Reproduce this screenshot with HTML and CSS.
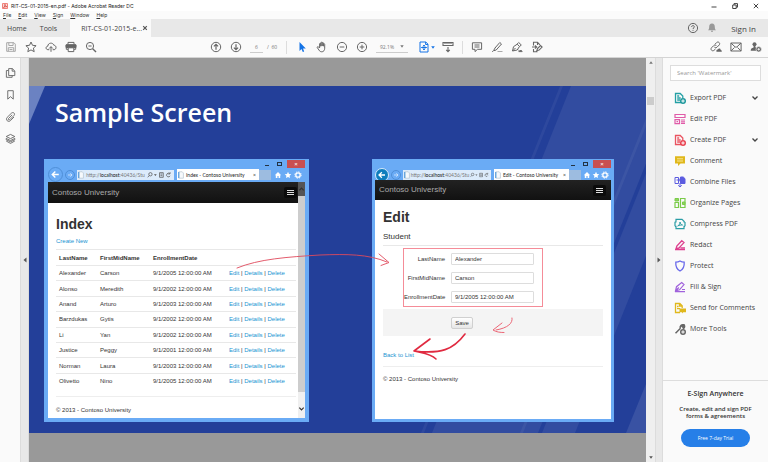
FILE: index.html
```
<!DOCTYPE html>
<html lang="en">
<head>
<meta charset="utf-8">
<title>RIT-CS-01-2015-en.pdf - Adobe Acrobat Reader DC</title>
<link rel="stylesheet" href="styles.css">
</head>
<body>
<svg class="defs" aria-hidden="true">
  <symbol id="plus-badge" viewBox="0 0 6 6"><circle cx="3" cy="3" r="3" fill="currentColor"/><path d="M3 1.3v3.4M1.3 3h3.4" stroke="#fff" stroke-width="1"/></symbol>
  <symbol id="house" viewBox="0 0 8 8"><path d="M4 1 .8 4.2h1V7h1.6V5h1.2v2h1.6V4.2h1z" fill="#fff"/></symbol>
  <symbol id="star" viewBox="0 0 8 8"><path d="m4 .8 1 2.1 2.3.3-1.7 1.6.4 2.3L4 6 2 7.1l.4-2.3L.7 3.2 3 2.9z" fill="#fff"/></symbol>
  <symbol id="gear" viewBox="0 0 8 8"><circle cx="4" cy="4" r="2.2" fill="none" stroke="#fff" stroke-width="1.3"/><circle cx="4" cy="4" r="3.2" fill="none" stroke="#fff" stroke-width=".9" stroke-dasharray="1.4 1.1"/></symbol>
  <symbol id="addr-tools" viewBox="0 0 28 8"><circle cx="3.7" cy="3.2" r="1.8"/><path d="M2.4 4.6.8 6.5M13.5 1.5h4v5h-4zM14.5 3h2M14.5 4.7h2M24.5 2.6a2 2 0 1 0 .4 2.3M24.8.9v2h-2"/><path d="M7.5 3.2h3L9 5z" fill="#555" stroke="none"/></symbol>
  <symbol id="page-mark" viewBox="0 0 6 8"><path d="M.8.8h3.4L5.400 2v5.200H.8z" fill="#f6f9fc" stroke="#a9b9c8" stroke-width=".6"/><path d="M.8 1v6" stroke="#3f8fd8" stroke-width="1"/></symbol>
  <symbol id="back" viewBox="0 0 16 16"><path d="M12 8H4.500M7.800 4.300 4 8l3.800 3.700" fill="none" stroke="#fff" stroke-width="1.700"/></symbol>
  <symbol id="fwd" viewBox="0 0 12 12"><path d="M3 6h6M6.500 3.500 9 6 6.500 8.500" fill="none" stroke="#d5e9ff" stroke-width="1.200"/></symbol>
  <symbol id="chev" viewBox="0 0 8 6"><path d="m1.500 1.500 2.500 2.500 2.500-2.500"/></symbol>
</svg>

<header class="titlebar">
  <svg class="app-icon" viewBox="0 0 8 8"><rect x=".5" y=".5" width="7" height="7" rx="1" fill="#fbd9d7" stroke="#e8483f"/><path d="M2 6c1.500-1 2.200-3 1.900-4.300C4.300 3.500 5 4.500 6.300 4.900 4.500 4.700 3.500 5 2 6z" fill="none" stroke="#c9231b" stroke-width=".8"/></svg>
  <span>RIT-CS-01-2015-en.pdf - Adobe Acrobat Reader DC</span>
  <div class="win-controls">
    <button aria-label="Minimize"><svg viewBox="0 0 8 8"><path d="M1.500 5h5"/></svg></button>
    <button aria-label="Restore"><svg viewBox="0 0 8 8"><path d="M1.700 3h3.500v3.500H1.700zM3 3V1.600h3.500v3.600H5.200"/></svg></button>
    <button aria-label="Close"><svg viewBox="0 0 8 8"><path d="m1.800 1.800 4.400 4.400m0-4.400L1.800 6.200"/></svg></button>
  </div>
</header>
<nav class="menubar">
  <button><u>F</u>ile</button><button><u>E</u>dit</button><button><u>V</u>iew</button><button><u>S</u>ign</button><button><u>W</u>indow</button><button><u>H</u>elp</button>
</nav>
<nav class="tabs">
  <button class="tab home">Home</button>
  <button class="tab tools">Tools</button>
  <div class="tab doc-tab"><span>RIT-CS-01-2015-e...</span><button aria-label="Close tab"><svg viewBox="0 0 6 6"><path d="m1.200 1.200 3.600 3.600m0-3.600L1.200 4.800" stroke="#555" stroke-width="1.200"/></svg></button></div>
  <div class="account">
    <button aria-label="Help"><svg class="ico" viewBox="0 0 12 12"><circle cx="6" cy="6" r="4.600"/><path d="M4.600 4.900C4.700 3 7.600 3.200 7.300 5c-.1.800-1.300.9-1.300 2M6 7.900v.9"/></svg></button>
    <button aria-label="Notifications"><svg class="ico" viewBox="0 0 12 12"><path d="M6 1.500c-2 0-2.800 1.500-2.800 3.200 0 2-.5 2.700-1.200 3.500h8c-.7-.8-1.200-1.500-1.200-3.500C8.800 3 8 1.500 6 1.500zM5 8.800h2v1H5z" fill="#999" stroke="none"/></svg></button>
    <button class="sign-in">Sign In</button>
  </div>
</nav>
<div class="toolbar">
  <div class="tool-group">
    <button aria-label="Save" class="dim"><svg class="ico" viewBox="0 0 12 12"><path d="M1.700 1.700h7.200l1.400 1.400v7.200H1.700zM3.800 1.700V4.500h4.300V1.700M3.300 10.200V6.700h5.400v3.500M4.500 8.500h3"/></svg></button>
    <button aria-label="Star"><svg class="ico" viewBox="0 0 12 12"><path d="m6 1 1.500 3.300 3.600.4-2.700 2.400.8 3.600L6 8.900l-3.200 1.800.8-3.600L.9 4.700l3.600-.4z"/></svg></button>
    <button aria-label="Upload"><svg class="ico" viewBox="0 0 12 12"><path d="M4.300 8.700H3C.5 8.600.4 5.400 2.800 5.200 2.900 1.500 8 1.200 8.800 4.200c2.900.1 2.900 4.300.3 4.500H7.700M6 10.800V5.800M4.200 7.500 6 5.600l1.800 1.900"/></svg></button>
    <button aria-label="Print"><svg class="ico" viewBox="0 0 12 12"><path d="M3 3.500V1.400h6v2.100M3 8.300H1.300V4h9.400v4.300H9"/><path d="M1 3.800h10v2.700H1z" fill="#666"/><path d="M3.200 6.800h5.600v3.800H3.200z" fill="#fff"/></svg></button>
    <button aria-label="Find"><svg class="ico" viewBox="0 0 12 12"><circle cx="5" cy="5" r="3.600"/><path d="m7.700 7.700 3.300 3.200" stroke-width="1.400"/><path d="M3.400 5h3.200"/></svg></button>
  </div>
  <div class="tool-group center">
    <button aria-label="Previous page"><svg class="ico" viewBox="0 0 12 12"><circle cx="6" cy="6" r="4.700"/><path d="M6 8.800V3.400M3.900 5.400 6 3.300l2.100 2.100" stroke-width="1.200"/></svg></button>
    <button aria-label="Next page"><svg class="ico" viewBox="0 0 12 12"><circle cx="6" cy="6" r="4.700"/><path d="M6 3.200v5.400M3.900 6.600 6 8.700l2.100-2.100" stroke-width="1.200"/></svg></button>
    <input class="page-no" aria-label="Page number" value="6"><span class="page-total">/&nbsp; 60</span>
    <i class="sep"></i>
    <button aria-label="Select"><svg class="ico" viewBox="0 0 12 12"><path d="M3.500 1v9l2-1.900 1.300 2.900 1.400-.6L7 7.600h2.800z" fill="#1473e6" stroke="none"/></svg></button>
    <button aria-label="Hand"><svg class="ico" viewBox="0 0 12 12"><path d="M3.600 7V2.900c0-.9 1.200-.9 1.200 0V5.500M4.800 5V1.900c0-.9 1.300-.9 1.300 0V5M6.100 5V2.100c0-.9 1.300-.9 1.300 0V5.200M7.400 5.200V3.300c0-.9 1.300-.8 1.300 0v3.900c0 4.500-4.700 4.300-5.600 2L1.300 6.700c-.4-.9.600-1.400 1.200-.8L3.600 7"/></svg></button>
    <button aria-label="Zoom out"><svg class="ico" viewBox="0 0 12 12"><circle cx="6" cy="6" r="4.600"/><path d="M3.700 6h4.600"/></svg></button>
    <button aria-label="Zoom in"><svg class="ico" viewBox="0 0 12 12"><circle cx="6" cy="6" r="4.600"/><path d="M3.700 6h4.600M6 3.700v4.600"/></svg></button>
    <button class="zoom" aria-label="Zoom level"><span>92.1%</span><svg viewBox="0 0 4 3"><path d="M.3.300h3.400L2 2.700z" fill="#777"/></svg></button>
    <button class="fit" aria-label="Fit page"><svg class="ico blue" viewBox="0 0 12 12"><path d="M2 1h5.800L10 3.200V11H2zM7.600 1v2.500H10"/><path d="M6 4v5M3.500 6.500h5M5.200 4.800 6 4l.8.800M5.200 8.200l.8.800.8-.8M4.300 5.700l-.8.800.8.800M7.700 5.700l.8.800-.8.800"/></svg><svg class="caret" viewBox="0 0 4 3"><path d="M.2.300h3.600L2 2.700z" fill="#1473e6"/></svg></button>
    <button aria-label="Read mode"><svg class="ico" viewBox="0 0 12 12"><path d="M1 1.500h10v3H1zM3 1.500V3M5 1.500V3M7 1.500V3M9 1.500V3M6 6v4.500M4.200 8.900 6 10.700l1.800-1.800" stroke-width="1.100"/></svg></button>
    <i class="sep tight"></i>
    <button aria-label="Comment"><svg class="ico" viewBox="0 0 12 12"><path d="M1.400 1.800h9.200v6.500H6.500L4 10.600V8.300H1.400zM3.500 4h5M3.500 6h5"/></svg></button>
    <button aria-label="Highlight"><svg class="ico" viewBox="0 0 12 12"><path d="m3.500 7.500 5.300-6 1.700 1.500-5.300 6-2.400.700zM2.500 9.700l-1.300 1M5 7.200 4 6.300"/><path d="M6.500 10.500h5" stroke="#aaa"/></svg></button>
    <button aria-label="Sign"><svg class="ico" viewBox="0 0 12 12"><path d="m1.500 10 1-4.300 3.700-2.500 2.300 2.200L6.200 9zM1.500 10l3-3M6 3.200l1.700-1.700 2.600 2.500-1.700 1.500M7.500 10.600h3.800M7.500 8.800l1.300 1.500 1-1.300 1.300 1.300"/></svg></button>
    <button aria-label="Stamp"><svg class="ico" viewBox="0 0 12 12"><path d="M2.500 4.500V1.300h4L9 3.800M2.500 8v2.700h4M6.500 1.300V4M1 6h4.500M4 4.500 5.700 6.100 4 7.700M5.800 9.700l.7-2.200 3-3 1.600 1.600-3 3z" stroke-width="1.100"/></svg></button>
  </div>
  <div class="tool-group share">
    <button aria-label="Share link"><svg class="ico" viewBox="0 0 12 12"><path d="m5 3.200 1.700-1.700c1.700-1.500 4 .8 2.500 2.500L7 6.200C5.800 7.300 4.600 6.500 4.200 5.800M5.500 8 4 9.300c-1.700 1.500-4-.8-2.500-2.500L3.800 4.500C5 3.500 6 4.200 6.500 5"/><path d="M6.500 10.800c-.5-1.600.5-2.200 1.300-2.200.8-1.700 2.700-1.200 2.900.3 1.300.1 1.400 1.500.8 1.900z" fill="#666" stroke="none"/></svg></button>
    <button aria-label="Email"><svg class="ico" viewBox="0 0 12 12"><path d="M.9 2h10.200v8H.9zl4.300 4h1.600l4.300-4M.9 10l3.600-3.500M11.100 10 7.500 6.500"/></svg></button>
    <button aria-label="Add person"><svg class="ico" viewBox="0 0 12 12"><circle cx="4.500" cy="3.200" r="2" fill="#666" stroke="none"/><path d="M3.600 4.500h1.800v1.800l1.600.9v2.500H.7c0-2 .9-2.600 2.900-3.200z" fill="#666" stroke="none"/><circle cx="8.700" cy="8.300" r="2.700" fill="#666" stroke="#fafafa" stroke-width=".6"/><path d="M8.700 7v2.600M7.400 8.300H10" stroke="#fff" stroke-width=".8"/></svg></button>
  </div>
</div>

<div class="workspace">
  <aside class="rail">
    <button aria-label="Pages"><svg class="ico" viewBox="0 0 12 12"><path d="M4 1.200h4l2.700 2.600v5H4zM7.800 1.200V4h2.700M3.800 3.300H1.500v7.400h6.300v-2"/></svg></button>
    <button aria-label="Bookmarks"><svg class="ico" viewBox="0 0 12 12"><path d="M3 1.300h6v9.200L6 7.800l-3 2.700z"/></svg></button>
    <button aria-label="Attachments"><svg class="ico" viewBox="0 0 12 12"><path d="m7.800 3.700-4 4c-.9 1 .4 2.200 1.300 1.300l4.700-4.700c1.700-2-.8-4.200-2.600-2.600L2.300 6.500c-2.200 2.500 1.300 5.800 3.600 3.500L9.800 6"/></svg></button>
    <button aria-label="Layers"><svg class="ico" viewBox="0 0 12 12"><path d="m6 1 4.700 2.300L6 5.600 1.300 3.300zM1.300 5.400 6 7.700l4.700-2.300M1.300 5.400v1.400L6 9l4.700-2.200V5.400M1.300 8.200 6 10.800l4.700-2.600"/></svg></button>
  </aside>
  <button class="splitter left" aria-label="Collapse navigation"><svg viewBox="0 0 4 6"><path d="M3.500.5v5L.5 3z" fill="#555"/></svg></button>

  <main class="document">
    <section class="slide">
      <svg class="backdrop" viewBox="0 0 617 347" preserveAspectRatio="xMaxYMin slice" aria-hidden="true">
        <g fill="#fff"><path d="M542 0h106L509 347H403z" opacity=".07"/><path d="M652 0h33L546 347h-33z" opacity=".07"/><path d="M617 298v49h-20z" opacity=".1"/><path d="M531 0h3L395 347h-3zM630 0h3L494 347h-3z" opacity=".05"/></g>
      </svg>
      <svg class="corner" viewBox="0 0 16 38" aria-hidden="true"><path d="M0 0h16L0 38z" fill="#6b82c2"/></svg>
      <h1>Sample Screen</h1>
      <div class="shots">
        <article class="browser index">
          <div class="chrome">
            <div class="caption"><i class="min"></i><i class="max"></i><button aria-label="Close">×</button></div>
            <div class="nav">
              <svg class="nav-back" viewBox="0 0 16 16"><use href="#back"/></svg>
              <svg class="nav-fwd" viewBox="0 0 12 12"><use href="#fwd"/></svg>
              <div class="address"><svg class="mark" viewBox="0 0 6 8"><use href="#page-mark"/></svg><span>http://<b>localhost</b>:40436/Stu</span><svg class="addr-tools" viewBox="0 0 28 8"><use href="#addr-tools"/></svg></div>
              <div class="page-tab"><svg class="mark" viewBox="0 0 6 8"><use href="#page-mark"/></svg><span>Index - Contoso University</span><i>×</i></div>
              <i class="new-tab"></i>
              <div class="quick"><svg viewBox="0 0 8 8"><use href="#house"/></svg><svg viewBox="0 0 8 8"><use href="#star"/></svg><svg viewBox="0 0 8 8"><use href="#gear"/></svg></div>
            </div>
          </div>
          <div class="viewport">
            <div class="page">
              <div class="navbar"><a href="#">Contoso University</a><button class="burger" aria-label="Menu"><i></i><i></i><i></i></button></div>
              <div class="body">
                <h2>Index</h2>
                <p class="create"><a href="#">Create New</a></p>
                <table>
                  <thead><tr><th>LastName</th><th>FirstMidName</th><th>EnrollmentDate</th><th></th></tr></thead>
                  <tbody>
                    <tr><td>Alexander</td><td>Carson</td><td>9/1/2005 12:00:00 AM</td><td><a href="#">Edit</a> | <a href="#">Details</a> | <a href="#">Delete</a></td></tr>
                    <tr><td>Alonso</td><td>Meredith</td><td>9/1/2002 12:00:00 AM</td><td><a href="#">Edit</a> | <a href="#">Details</a> | <a href="#">Delete</a></td></tr>
                    <tr><td>Anand</td><td>Arturo</td><td>9/1/2003 12:00:00 AM</td><td><a href="#">Edit</a> | <a href="#">Details</a> | <a href="#">Delete</a></td></tr>
                    <tr><td>Barzdukas</td><td>Gytis</td><td>9/1/2002 12:00:00 AM</td><td><a href="#">Edit</a> | <a href="#">Details</a> | <a href="#">Delete</a></td></tr>
                    <tr><td>Li</td><td>Yan</td><td>9/1/2002 12:00:00 AM</td><td><a href="#">Edit</a> | <a href="#">Details</a> | <a href="#">Delete</a></td></tr>
                    <tr><td>Justice</td><td>Peggy</td><td>9/1/2001 12:00:00 AM</td><td><a href="#">Edit</a> | <a href="#">Details</a> | <a href="#">Delete</a></td></tr>
                    <tr><td>Norman</td><td>Laura</td><td>9/1/2003 12:00:00 AM</td><td><a href="#">Edit</a> | <a href="#">Details</a> | <a href="#">Delete</a></td></tr>
                    <tr><td>Olivetto</td><td>Nino</td><td>9/1/2005 12:00:00 AM</td><td><a href="#">Edit</a> | <a href="#">Details</a> | <a href="#">Delete</a></td></tr>
                  </tbody>
                </table>
                <footer>© 2013 - Contoso University</footer>
              </div>
            </div>
            <div class="page-scroll"><svg class="up" viewBox="0 0 8 6"><use href="#chev" transform="rotate(180 4 3)"/></svg><i></i><svg viewBox="0 0 8 6"><use href="#chev"/></svg></div>
          </div>
        </article>

        <article class="browser edit">
          <div class="chrome">
            <div class="caption"><i class="min"></i><i class="max"></i><button aria-label="Close">×</button></div>
            <div class="nav">
              <svg class="nav-back active" viewBox="0 0 16 16"><use href="#back"/></svg>
              <svg class="nav-fwd" viewBox="0 0 12 12"><use href="#fwd"/></svg>
              <div class="address"><svg class="mark" viewBox="0 0 6 8"><use href="#page-mark"/></svg><span>http://<b>localhost</b>:40436/Stu</span><svg class="addr-tools" viewBox="0 0 28 8"><use href="#addr-tools"/></svg></div>
              <div class="page-tab"><svg class="mark" viewBox="0 0 6 8"><use href="#page-mark"/></svg><span>Edit - Contoso University</span><i>×</i></div>
              <i class="new-tab"></i>
              <div class="quick"><svg viewBox="0 0 8 8"><use href="#house"/></svg><svg viewBox="0 0 8 8"><use href="#star"/></svg><svg viewBox="0 0 8 8"><use href="#gear"/></svg></div>
            </div>
          </div>
          <div class="viewport">
            <div class="page">
              <div class="navbar"><a href="#">Contoso University</a><button class="burger" aria-label="Menu"><i></i><i></i><i></i></button></div>
              <div class="body">
                <h2>Edit</h2>
                <h3>Student</h3>
                <form>
                  <div class="fields">
                    <label for="last">LastName</label><input id="last" value="Alexander">
                    <label for="first">FirstMidName</label><input id="first" value="Carson">
                    <label for="date">EnrollmentDate</label><input id="date" value="9/1/2005 12:00:00 AM">
                  </div>
                  <div class="actions"><button type="button">Save</button></div>
                </form>
                <p class="return"><a href="#">Back to List</a></p>
                <footer>© 2013 - Contoso University</footer>
              </div>
            </div>
          </div>
        </article>
      </div>
      <svg class="ink" viewBox="0 0 617 347" aria-hidden="true">
        <path d="M208 182c22-9 50-11 83-13 27-1 48-1 67 7M350 168l10 8.500-8 3" stroke="#e0495c" stroke-width=".9"/>
        <path d="M483 232c1 5-4 10-16 12M473 237l-9 7c3 2 7 2.500 11 2.500" stroke="#ec6676" stroke-width="1"/>
        <path d="M436 248c-12 16-24 20-51 17M401 253l-16 12c8 2 16 2 22 8" stroke="#e02a40" stroke-width="1.600"/>
      </svg>
    </section>
  </main>
  <div class="doc-scroll"><svg viewBox="0 0 4 3"><path d="M.2 2.700h3.600L2 .3z" fill="#777"/></svg><i></i><svg class="down" viewBox="0 0 4 3"><path d="M.2.300h3.600L2 2.700z" fill="#555"/></svg></div>
  <button class="splitter right" aria-label="Collapse tools"><svg viewBox="0 0 4 6"><path d="M.5.5v5l3-2.500z" fill="#555"/></svg></button>

  <aside class="panel">
    <input class="search" type="search" aria-label="Search tools" placeholder="Search 'Watermark'">
    <ul>
      <li><svg viewBox="0 0 12 12" stroke="#24a0a5" color="#1d979c"><path d="M7 10.500H1.500v-9h4.700l2.600 2.600V6M3.200 4h2M3.200 6h3.500M3.200 8H6" stroke-width="1.300"/><use href="#plus-badge" x="6" y="6" width="6" height="6" stroke="none"/></svg><a href="#">Export PDF</a><svg class="more" viewBox="0 0 8 6"><use href="#chev"/></svg></li>
      <li><svg viewBox="0 0 12 12" stroke="#e05aa8"><path d="M1 1.500h10v3H1zM1 6.700h4.500v4H1zM7 7h4M7 8.800h4M7 10.500h4M2.500 8.700h1.500" stroke-width="1.200"/></svg><a href="#">Edit PDF</a></li>
      <li><svg viewBox="0 0 12 12" stroke="#ea5461" color="#e8414f"><path d="M7 10.500H1.500v-9h4.700l2.600 2.600V6M3.200 4h2M3.200 6h3.500M3.200 8H6" stroke-width="1.300"/><use href="#plus-badge" x="6" y="6" width="6" height="6" stroke="none"/></svg><a href="#">Create PDF</a><svg class="more" viewBox="0 0 8 6"><use href="#chev"/></svg></li>
      <li><svg viewBox="0 0 12 12"><path d="M1 1.300h10v7.200H6.500L4 11V8.500H1z" fill="#e0b81c"/><path d="M3 3.800h6M3 6h6" stroke="#fff3b8" stroke-width=".8"/></svg><a href="#">Comment</a></li>
      <li><svg viewBox="0 0 12 12" stroke="#5c5ce0"><path d="M1 1.500h3.500v6H1z"/><path d="M6.500 1h2.700L11 2.700v4.800H6.500z" fill="#5c5ce0"/><path d="M2.500 4h4M5 2.500 6.500 4 5 5.500M6 7v4M4.200 9.300 6 11l1.800-1.700"/></svg><a href="#">Combine Files</a></li>
      <li><svg viewBox="0 0 12 12" stroke="#7bcb4a"><path d="M1 5.500h3.500v5H1zM6.500 1.500H11v9H6.500z" stroke-width="1.200"/><path d="M1 1.500h3.500V4H1zM8.500 5H11v2.500H8.500z" fill="#8ed65c"/></svg><a href="#">Organize Pages</a></li>
      <li><svg viewBox="0 0 12 12" stroke="#2a9da5"><path d="M2 3.500V1.300h6L10 3.300v1M2 8.500v2.200h8v-2.500M1 3.700v4.600M11 4v4.300M1 4h1.500M9.500 4H11M1 8.300h1.500M9.500 8.300H11" stroke-width="1.200"/><path d="M3.700 8c1.600-.9 2.500-2.500 2.300-4 .4 1.800 1.200 2.700 2.500 3-1.800-.1-3.200.1-4.800 1z"/></svg><a href="#">Compress PDF</a></li>
      <li><svg viewBox="0 0 12 12" stroke="#dd3f8e"><path d="M7.800 1.700 10 3.600 5 9l-2.900.6.700-2.500zM1 10.500h10M6.500 8.800H11" stroke-width="1.300"/></svg><a href="#">Redact</a></li>
      <li><svg viewBox="0 0 12 12" stroke="#6b6bea"><path d="M6 1c1.500 1 2.800 1.200 4.200 1.200C10.500 6.500 9 9.500 6 11 3 9.500 1.500 6.500 1.800 2.200 3.200 2.200 4.500 2 6 1z" stroke-width="1.300"/></svg><a href="#">Protect</a></li>
      <li><svg viewBox="0 0 12 12" stroke="#a062dc"><path d="m1.500 10 1-4.300L7.700 1.500l2.300 2.100L5.500 8.800zM1.500 10l3.300-3.500M1 10.700h10M8 8.500h3" stroke-width="1.200"/></svg><a href="#">Fill &amp; Sign</a></li>
      <li><svg viewBox="0 0 12 12" stroke="#e0b81c"><path d="M6 10.500H1.500v-9h4.300l2.400 2.300V6M5.500 1.500V4H8M3 4.500h1.500M3 6.700h3" stroke-width="1.300"/><path d="M5.500 6.500H12v3.800H9.200L8 11.500v-1.200H5.500z" fill="#e0b81c" stroke="none"/></svg><a href="#">Send for Comments</a></li>
      <li><svg viewBox="0 0 12 12" stroke="#666" color="#666"><path d="m1.500 10.300 5-5M6.300 5.300C5.500 3 7.500 1.200 9.600 1.800L8 3.400l.9.900 1.600-1.600c.5 1.500-.4 2.800-1.800 3.200" stroke-width="1.500"/><use href="#plus-badge" x="6" y="6" width="6" height="6" stroke="none"/></svg><a href="#">More Tools</a></li>
    </ul>
    <div class="promo">
      <h4>E-Sign Anywhere</h4>
      <p>Create, edit and sign PDF forms &amp; agreements</p>
      <button>Free 7-day Trial</button>
    </div>
  </aside>
</div>
</body>
</html>
```
FILE: styles.css
```
* { box-sizing: border-box; }
html, body { height: 100%; }
body { margin: 0; display: flex; flex-direction: column; overflow: hidden; background: #fafafa; color: #444; font-family: "Open Sans", "Noto Sans", sans-serif; font-size: 7px; }
button { border: 0; padding: 0; margin: 0; background: none; font: inherit; color: inherit; line-height: inherit; }
input { font: inherit; color: inherit; margin: 0; padding: 0; border: 0; border-radius: 0; min-width: 0; outline: 0; }
a { text-decoration: none; color: inherit; }
h1, h2, h3, h4, p, ul { margin: 0; padding: 0; }
svg { display: block; flex: none; }
i { font-style: normal; }
.defs { position: absolute; width: 0; height: 0; }
.ico { width: 12px; height: 12px; fill: none; stroke: #666; stroke-width: 1; }
.blue { stroke: #1473e6; }

.titlebar { display: flex; align-items: center; height: 11px; flex: none; background: #fff; padding-left: 2px; gap: 3px; font-family: Inter, sans-serif; font-size: 5px; line-height: 8px; color: #222; }
.app-icon { width: 6px; height: 6px; }
.win-controls { margin-left: auto; display: flex; gap: 13px; padding-right: 8px; }
.win-controls svg { width: 8px; height: 8px; fill: none; stroke: #444; stroke-width: 1; }
.menubar { display: flex; gap: 7px; padding-left: 3px; height: 8px; flex: none; align-items: center; font-family: Inter, sans-serif; font-size: 5px; line-height: 8px; color: #333; background: #fbfbfb; }

.tabs { display: flex; height: 18px; flex: none; background: #e8e8e8; white-space: nowrap; }
.tab { display: flex; align-items: center; }
.home { margin-left: 7px; }
.tools { margin-left: 13px; }
.doc-tab { margin-left: 13px; min-width: 81px; padding: 0 3px 0 11px; background: #fafafa; justify-content: space-between; }
.doc-tab svg { width: 6px; height: 6px; }
.account { margin-left: auto; display: flex; align-items: center; gap: 7px; padding-right: 12px; }
.sign-in { margin-left: 6px; font-size: 8px; }

.toolbar { display: flex; height: 21px; flex: none; border-bottom: 1px solid #d4d4d4; background: #fafafa; }
.tool-group { display: flex; align-items: center; padding-left: 1px; }
.tool-group > button { width: 20px; height: 20px; display: flex; align-items: center; justify-content: center; }
.dim { opacity: .55; }
.tool-group.center { margin-left: 104px; font-size: 5px; color: #777; }
.page-no { width: 13px; height: 12px; margin-left: 4px; text-align: center; border-bottom: 1px solid #ccc; background: none; }
.page-total { margin-left: 4px; width: 14px; }
.sep { width: 1px; height: 13px; background: #ddd; margin: 0 5px; }
.sep.tight { margin: 0 4px; }
.tool-group > .zoom { width: 32px; height: 12px; margin: 0 8px 0 4px; justify-content: space-between; padding: 0 4px; border-bottom: 1px solid #ccc; }
.zoom svg, .caret { width: 4px; height: 3px; }
.tool-group > .fit { gap: 1px; margin-right: 2px; }
.share { margin-left: auto; padding-right: 2px; }

.workspace { flex: 1; display: flex; min-height: 0; }
.rail { width: 20px; flex: none; padding-top: 9px; display: flex; flex-direction: column; align-items: center; gap: 10px; }
.rail svg { width: 11px; height: 12px; }
.splitter { flex: none; width: 9px; background: #e8e8e8; border: 1px solid #dcdcdc; border-width: 0 1px; display: flex; align-items: center; justify-content: center; }
.splitter.right { width: 8px; }
.splitter svg { width: 4px; height: 6px; }
.document { flex: 1; min-width: 0; overflow: hidden; background: #999; padding-top: 28px; }
.doc-scroll { width: 9px; flex: none; background: #efefef; display: flex; flex-direction: column; align-items: center; padding: 3px 0; }
.doc-scroll svg { width: 4px; height: 3px; }
.doc-scroll i { width: 7px; height: 8px; margin-top: 33px; background: #ccc; }
.doc-scroll .down { margin-top: auto; }

.slide { position: relative; height: 347px; background: #233f99; overflow: hidden; }
.backdrop { position: absolute; inset: 0; width: 100%; height: 100%; }
.corner { position: absolute; left: 0; top: 0; width: 16px; height: 38px; }
.ink { position: absolute; left: 0; top: 0; width: 617px; height: 347px; fill: none; stroke-linecap: round; stroke-linejoin: round; pointer-events: none; }
h1 { position: relative; padding: 9px 0 0 26px; height: 73px; font-size: 25px; line-height: 34px; font-weight: 600; color: #fff; }
.shots { position: relative; display: flex; gap: 63px; padding-left: 15px; font-family: "Liberation Sans", Arial, sans-serif; font-size: 6px; line-height: 8px; color: #333; }
.browser { width: 265px; height: 263px; background: #6aabf5; padding: 0 4px 4px; display: flex; flex-direction: column; }
.edit { width: 242px; padding: 0 3px 3px; }
.chrome { height: 23px; flex: none; }
.edit .chrome { height: 21px; }
.caption { display: flex; justify-content: flex-end; align-items: center; height: 9px; }
.caption .min { width: 4px; height: 1px; background: #234; margin: 3px 8px 0 0; }
.caption .max { width: 5px; height: 4px; border: 1px solid #234; margin-right: 5px; }
.caption button { width: 18px; height: 8px; background: #c94f50; color: #fff; line-height: 8px; text-align: center; }
.nav { display: flex; align-items: center; height: 13px; font-family: Lato, sans-serif; font-size: 5px; line-height: 8px; color: #444; white-space: nowrap; }
.nav-back { width: 15px; height: 15px; border-radius: 50%; border: 1px solid #4f8fd8; }
.nav-back.active { width: 14px; height: 14px; background: #0e7dbd; border-color: #d6e9fa; }
.nav-fwd { width: 10px; height: 10px; margin: 0 2px; border-radius: 50%; border: 1px solid #4f8fd8; }
.address { width: 97px; height: 10px; background: #dcebfb; display: flex; align-items: center; justify-content: space-between; padding: 0 1px; color: #777; }
.address b { font-weight: 400; color: #111; }
.addr-tools { width: 26px; height: 8px; fill: none; stroke: #555; stroke-width: .8; }
.mark { width: 6px; height: 8px; }
.page-tab { width: 82px; height: 11px; margin-left: 3px; background: #fff; display: flex; align-items: center; padding: 0 3px 0 1px; gap: 2px; color: #222; }
.page-tab i { margin-left: auto; }
.new-tab { width: 12px; height: 10px; background: #9dbce0; }
.quick { margin-left: auto; display: flex; gap: 2px; padding-right: 3px; }
.quick svg { width: 8px; height: 8px; }
.edit .address { width: 88px; }
.edit .addr-tools { width: 20px; }
.edit .page-tab { width: 75px; }
.edit .quick { gap: 1px; padding-right: 2px; }

.viewport { flex: 1; display: flex; min-height: 0; background: #fff; }
.page { flex: 1; min-width: 0; }
.navbar { height: 21px; display: flex; align-items: center; justify-content: space-between; padding: 0 1px 0 4px; background: linear-gradient(#222, #111); color: #aaa; font-size: 8px; }
.burger { width: 13px; height: 11px; border-radius: 2px; background: #0b0b0b; display: flex; flex-direction: column; align-items: center; justify-content: center; gap: 1px; }
.burger i { width: 7px; height: 1px; background: #ddd; }
.edit .navbar { height: 20px; padding-right: 5px; }
.body { padding: 11px 2px 0 8px; }
.body a { color: #1a94d2; }
h2 { font-size: 14px; line-height: 20px; color: #333; }
.create { padding: 3px 0 4px; }
table { width: 100%; height: 139px; border-collapse: collapse; table-layout: fixed; }
th, td { text-align: left; padding: 0 0 0 3px; border-top: 1px solid #e8e8e8; white-space: nowrap; }
thead tr { height: 16px; }
th:nth-child(1) { width: 41px; }
th:nth-child(2) { width: 53px; }
th:nth-child(3) { width: 76px; }
.body footer { border-top: 1px solid #eee; margin-top: 8px; padding-top: 9px; }
.page-scroll { width: 7px; background: #f0f0f0; display: flex; flex-direction: column; align-items: center; }
.page-scroll svg { width: 7px; height: 6px; margin: auto 0 6px; fill: none; stroke: #333; stroke-width: 1.4; }
.page-scroll .up { height: 14px; margin: 0; background: #555; }
.page-scroll i { width: 7px; height: 196px; background: #cdcdcd; }

.edit .body { padding: 8px 8px 0; }
.edit h2 { line-height: 19px; }
h3 { font-size: 8px; line-height: 12px; font-weight: 400; padding: 4px 0 3px; height: 19px; border-bottom: 1px solid #e8e8e8; }
.fields { margin: 2px 60px 0 20px; height: 59px; border: 1px solid #f58c98; display: grid; grid-template-columns: 41px 83px; column-gap: 6px; row-gap: 7px; align-content: center; align-items: center; }
.fields label { text-align: right; white-space: nowrap; }
.fields input { height: 12px; padding: 0 3px; border: 1px solid #ddd; border-radius: 1px; background: #fff; }
.actions { height: 27px; margin-top: 2px; padding-left: 68px; background: #f4f4f4; display: flex; align-items: center; }
.actions button { width: 22px; height: 12px; border: 1px solid #d0d0d0; border-radius: 2px; background: linear-gradient(#fff, #e6e6e6); line-height: 8px; }
.return { padding: 15px 0 7px; }
.edit footer { margin-top: 0; padding-top: 8px; }

.panel { width: 105px; flex: none; display: flex; flex-direction: column; padding-top: 7px; }
.search { margin: 0 7px 6px; height: 16px; border: 1px solid #ddd; background: #fff; padding: 0 6px; font-size: 6px; appearance: none; }
.search::placeholder { color: #999; }
.panel ul { list-style: none; padding: 0 9px 0 11px; }
.panel li { height: 21px; display: flex; align-items: center; gap: 4px; }
.panel li svg { width: 12px; height: 12px; fill: none; }
.panel li .more { width: 8px; height: 6px; margin-left: auto; stroke: #444; stroke-width: 1.3; }
.promo { margin-top: auto; height: 82px; border-top: 1px solid #ddd; padding-top: 8px; text-align: center; color: #333; }
.promo h4 { font-size: 7px; line-height: 10px; font-weight: 600; }
.promo p { font-size: 6px; line-height: 7px; font-weight: 600; padding: 7px 12px 9px; }
.promo button { width: 69px; height: 18px; border-radius: 9px; background: #267fe8; color: #fff; font-size: 5px; }
```
